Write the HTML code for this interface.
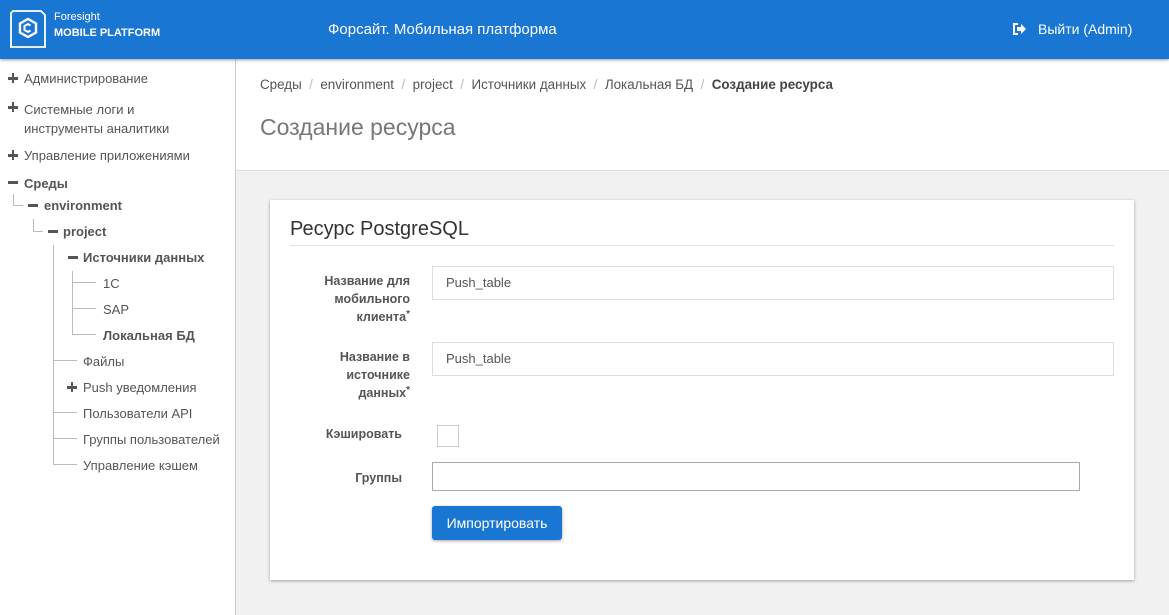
<!DOCTYPE html>
<html><head><meta charset="utf-8"><style>
*{margin:0;padding:0;box-sizing:border-box}
body{width:1169px;height:615px;overflow:hidden;font-family:"Liberation Sans",sans-serif;background:#f1f1f1;position:relative;color:#555}
.hdr{position:absolute;left:0;top:0;width:1169px;height:59px;background:#1976d2;box-shadow:0 1px 3px rgba(0,0,0,.4);z-index:2;color:#fff}
.side{position:absolute;left:0;top:59px;width:236px;height:556px;background:#fff;border-right:1px solid #ccc;font-size:13px;color:#555}
.t{position:absolute;white-space:nowrap}
.b{font-weight:bold}
.p{position:absolute;width:10px;height:10px}
.p:before{content:"";position:absolute;left:0;top:4px;width:10px;height:2.5px;background:#555}
.p:after{content:"";position:absolute;left:3.75px;top:0;width:2.5px;height:10px;background:#555}
.m{position:absolute;width:10px;height:2.5px;background:#555}
.hl{position:absolute;background:#bbb;height:1px}
.vl{position:absolute;background:#bbb;width:1px}
.top{position:absolute;left:236px;top:59px;width:933px;height:112px;background:#fff;border-bottom:1px solid #ddd}
.card{position:absolute;left:270px;top:200px;width:864px;height:380px;background:#fff;box-shadow:0 1px 3px rgba(0,0,0,.35)}
.lbl{position:absolute;font-size:12.5px;font-weight:bold;color:#555;text-align:right;line-height:18px}
.lbl sup{font-size:10px;line-height:0;vertical-align:4px}
.inp{position:absolute;border:1px solid #ddd;background:#fff;font-size:13px;color:#555;padding-left:13px;line-height:32px}
</style></head><body>
<div class="hdr">
<svg style="position:absolute;left:10px;top:10px" width="36" height="38" viewBox="0 0 36 38"><path d="M3 1H31L35 5V37H1V3Z" fill="none" stroke="#fff" stroke-width="1.8"/><path d="M18 9L26 13.5V22.5L18 27L10 22.5V13.5Z" fill="none" stroke="#fff" stroke-width="2.4"/><path d="M20.5 15.5L18 14L14.5 16V20L18 22L20.5 20.5" fill="none" stroke="#fff" stroke-width="2"/></svg>
<div class="t" style="left:54px;top:11px;font-size:11px">Foresight</div>
<div class="t b" style="left:54px;top:27px;font-size:11px">MOBILE PLATFORM</div>
<div class="t" style="left:328px;top:21px;font-size:15px">Форсайт. Мобильная платформа</div>
<svg style="position:absolute;left:1013px;top:23px" width="14" height="12" viewBox="0 0 14 12"><path d="M5 1H1V11H5" fill="none" stroke="#fff" stroke-width="2"/><path d="M4 4H8V1L13 6L8 11V8H4Z" fill="#fff"/></svg>
<div class="t" style="left:1038px;top:21px;font-size:14px">Выйти (Admin)</div>
</div>
<div class="side">
<div class="p" style="left:8px;top:14px"></div><div class="t" style="left:24px;top:12px">Администрирование</div>
<div class="p" style="left:8px;top:43px"></div><div class="t" style="left:24px;top:41px;line-height:19px">Системные логи и<br>инструменты аналитики</div>
<div class="p" style="left:8px;top:91px"></div><div class="t" style="left:24px;top:89px">Управление приложениями</div>
<div class="m" style="left:8px;top:122px"></div><div class="t b" style="left:24px;top:117px">Среды</div>
<div class="vl" style="left:13px;top:135px;height:11px"></div><div class="hl" style="left:13px;top:146px;width:10px"></div>
<div class="m" style="left:28px;top:145px"></div><div class="t b" style="left:44px;top:139px">environment</div>
<div class="vl" style="left:33px;top:160px;height:12px"></div><div class="hl" style="left:33px;top:172px;width:10px"></div>
<div class="m" style="left:48px;top:171px"></div><div class="t b" style="left:63px;top:165px">project</div>
<div class="vl" style="left:53px;top:186px;height:220px"></div>
<div class="m" style="left:68px;top:197px"></div><div class="t b" style="left:83px;top:191px">Источники данных</div>
<div class="vl" style="left:72px;top:212px;height:64px"></div>
<div class="hl" style="left:72px;top:223px;width:24px"></div><div class="t" style="left:103px;top:217px">1C</div>
<div class="hl" style="left:72px;top:249px;width:24px"></div><div class="t" style="left:103px;top:243px">SAP</div>
<div class="hl" style="left:72px;top:275px;width:24px"></div><div class="t b" style="left:103px;top:269px">Локальная БД</div>
<div class="hl" style="left:53px;top:301px;width:24px"></div><div class="t" style="left:83px;top:295px">Файлы</div>
<div class="p" style="left:67px;top:323px"></div><div class="t" style="left:83px;top:321px">Push уведомления</div>
<div class="hl" style="left:53px;top:353px;width:24px"></div><div class="t" style="left:83px;top:347px">Пользователи API</div>
<div class="hl" style="left:53px;top:379px;width:24px"></div><div class="t" style="left:83px;top:373px">Группы пользователей</div>
<div class="hl" style="left:53px;top:405px;width:24px"></div><div class="t" style="left:83px;top:399px">Управление кэшем</div>
</div>
<div class="top">
<div class="t" style="left:24px;top:18px;font-size:13.4px;color:#555">Среды &nbsp;<span style="color:#bbb">/</span>&nbsp; environment &nbsp;<span style="color:#bbb">/</span>&nbsp; project &nbsp;<span style="color:#bbb">/</span>&nbsp; Источники данных &nbsp;<span style="color:#bbb">/</span>&nbsp; Локальная БД &nbsp;<span style="color:#bbb">/</span>&nbsp; <b style="color:#444">Создание ресурса</b></div>
<div class="t" style="left:24px;top:55px;font-size:23px;color:#777">Создание ресурса</div>
</div>
<div class="card">
<div class="t" style="left:20px;top:18px;font-size:20px;color:#333">Ресурс PostgreSQL</div>
<div class="hl" style="left:20px;top:45px;width:824px;background:#e2e2e2"></div>
<div class="lbl" style="left:20px;top:72px;width:120px">Название для<br>мобильного<br>клиента<sup>*</sup></div>
<div class="inp" style="left:162px;top:66px;width:682px;height:34px">Push_table</div>
<div class="lbl" style="left:20px;top:148px;width:120px">Название в<br>источнике<br>данных<sup>*</sup></div>
<div class="inp" style="left:162px;top:142px;width:682px;height:34px">Push_table</div>
<div class="lbl" style="left:20px;top:225px;width:112px">Кэшировать</div>
<div style="position:absolute;left:167px;top:225px;width:22px;height:22px;border:1px solid #ccc"></div>
<div class="lbl" style="left:20px;top:269px;width:112px">Группы</div>
<div style="position:absolute;left:162px;top:262px;width:648px;height:29px;border:1px solid #aaa"></div>
<div style="position:absolute;left:162px;top:306px;width:130px;height:34px;background:#1976d2;border-radius:3px;color:#fff;font-size:14px;text-align:center;line-height:34px;box-shadow:0 1px 3px rgba(0,0,0,.35)">Импортировать</div>
</div>
</body></html>
